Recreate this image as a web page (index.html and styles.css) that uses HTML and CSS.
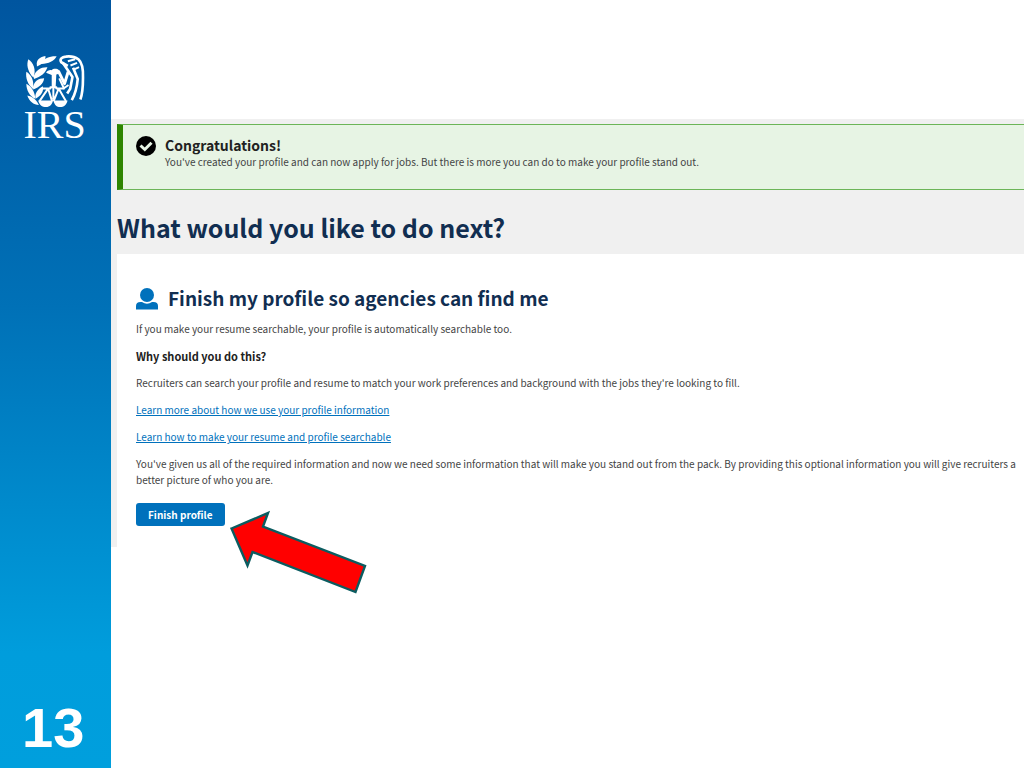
FILE: index.html
```html
<!DOCTYPE html>
<html lang="en">
<head>
<meta charset="utf-8">
<meta name="viewport" content="width=device-width, initial-scale=1">
<title>Finish profile</title>
<link rel="stylesheet" href="styles.css">
</head>
<body>
<div class="slide">
  <aside class="sidebar">
    <div class="brand">
      <svg class="emblem" viewBox="27 22 180 164" aria-hidden="true">
        <g fill="#fff">
          <path d="M62 56C60 42 68 31 88 28C89 42 80 53 62 60Z"/>
          <path d="M72 52C84 34 102 28 122 29C114 44 96 53 72 52Z"/>
          <path d="M36 38C52 50 60 68 52 94L46 88C34 72 30 54 36 38Z"/>
          <path d="M53 88C60 70 74 61 94 62C88 80 74 90 53 98Z"/>
          <path d="M30 76C46 86 54 104 50 128C34 114 27 96 30 76Z"/>
          <path d="M50 122C54 106 66 96 84 96C82 112 70 123 51 130Z"/>
          <path d="M30 112C46 121 56 136 57 158C40 150 30 132 30 112Z"/>
          <path d="M57 152C58 138 66 127 80 120C84 136 74 149 58 158Z"/>
          <path d="M33 148C48 151 60 160 68 177C52 177 38 165 33 148Z"/>
          <path d="M90 79C93 72 100 70 107 71C111 66 123 65 129 71C134 77 131 82 121 84L119 123H107V86Z"/>
        </g>
        <g fill="none" stroke="#fff" stroke-linejoin="round">
          <path stroke-width="8" d="M156 58L136 47C130 38 138 31 150 30C165 28 178 31 188 38C199 48 203 68 202 94C202 120 201 142 194 160"/>
          <path stroke-width="6" d="M76 127H103V123H121V127H146M96 127L70 165M96 127L108 165M128 127L113 165M128 127L150 165M112 122V160"/>
          <path stroke-width="9" d="M127 73L146 112L157 76"/>
          <path stroke-width="6" d="M130 96L144 126L158 116"/>
          <path stroke-width="8" d="M140 48L170 92L163 128L154 142M172 64L186 98C184 120 178 144 168 162"/>
          <path stroke-width="6" d="M156 44L178 38M164 57L184 49M172 70L190 62"/>
        </g>
        <path fill="#fff" d="M66 163H111C109 174 101 183 90 183C78 183 69 176 66 163ZM112 163H155C153 176 143 183 133 183C122 183 115 176 112 163Z"/>
      </svg>
      <span class="wordmark">IRS</span>
    </div>
    <span class="slide-number">13</span>
  </aside>

  <main class="content">
    <div class="panel">
      <section class="alert">
        <svg class="alert-icon" viewBox="0 0 20 20" aria-hidden="true">
          <circle cx="10" cy="10" r="10"/>
          <path d="M4.500 9.500L8.800 13.500L15.500 6.700" fill="none" stroke="#e7f4e4" stroke-width="3"/>
        </svg>
        <div>
          <h2 class="alert-title">Congratulations!</h2>
          <p class="alert-text">You've created your profile and can now apply for jobs. But there is more you can do to make your profile stand out.</p>
        </div>
      </section>
      <h1 class="page-title">What would you like to do next?</h1>
      <section class="card">
        <div class="card-heading">
          <svg class="person" viewBox="0 0 22 22" aria-hidden="true">
            <circle cx="11" cy="7" r="7"/>
            <path d="M0 21.500V18Q0 14 4.500 14H6Q11 17.500 16 14H17.500Q22 14 22 18V21.500Z"/>
          </svg>
          <h2 class="card-title">Finish my profile so agencies can find me</h2>
        </div>
        <p>If you make your resume searchable, your profile is automatically searchable too.</p>
        <h3 class="question">Why should you do this?</h3>
        <p>Recruiters can search your profile and resume to match your work preferences and background with the jobs they're looking to fill.</p>
        <p><a href="#profile-information">Learn more about how we use your profile information</a></p>
        <p><a href="#searchable">Learn how to make your resume and profile searchable</a></p>
        <p>You've given us all of the required information and now we need some information that will make you stand out from the pack. By providing this optional information you will give recruiters a better picture of who you are.</p>
        <div class="actions">
          <button class="primary" type="button">Finish profile</button>
          <svg class="arrow" viewBox="229 510 140 84" aria-hidden="true">
            <path d="M231.500 528.500L268 513L263 526.500L365 566L355.500 592L252.500 552L247.500 565.500Z" fill="#f00" stroke="#0b5c60" stroke-width="2.400"/>
          </svg>
        </div>
      </section>
    </div>
  </main>
</div>
</body>
</html>
```
FILE: styles.css
```css
* {
  box-sizing: border-box;
}

body,
h1,
h2,
h3,
p {
  margin: 0;
}

body {
  background: #fff;
  color: #444;
  font-family: "Noto Sans CJK SC", "Noto Sans", sans-serif;
  font-size: 10px;
  line-height: 16px;
}

.slide {
  display: flex;
  min-height: 100vh;
}

.sidebar {
  display: flex;
  flex: 0 0 111px;
  flex-direction: column;
  justify-content: space-between;
  padding: 54px 24px 8px 22px;
  background: linear-gradient(#00559f, #0071b7 40%, #009ddc 85%, #009fdd);
  color: #fff;
}

.brand {
  display: flex;
  flex-direction: column;
  align-items: center;
}

.emblem {
  width: 60px;
  height: 54px;
}

.wordmark {
  font-family: "Liberation Serif", serif;
  font-size: 40px;
  line-height: 34px;
}

.slide-number {
  font-family: "Liberation Sans", sans-serif;
  font-size: 56px;
  font-weight: bold;
  line-height: 64px;
}

.content {
  flex: 1;
  min-width: 0;
  padding-top: 119px;
}

.panel {
  padding: 5px 0 0 6px;
  background: #f0f0f0;
}

.alert {
  display: flex;
  gap: 9px;
  min-height: 66px;
  padding: 11px 13px;
  border: 1px solid #6cb558;
  border-right: 0;
  border-left: 6px solid #2e8500;
  background: #e7f4e4;
}

.alert-icon {
  flex: none;
  width: 20px;
  height: 20px;
}

.alert-title {
  color: #212121;
  font-size: 14px;
  line-height: 18px;
}

.page-title {
  padding: 19px 0 9px;
  color: #112e51;
  font-size: 25px;
  line-height: 36px;
}

.card {
  display: flex;
  flex-direction: column;
  gap: 11px;
  padding: 31px 8px 21px 19px;
  background: #fff;
}

.card-heading {
  display: flex;
  align-items: flex-end;
  gap: 10px;
}

.person {
  width: 22px;
  height: 22px;
  fill: #0071bc;
}

.card-title {
  color: #112e51;
  font-size: 19px;
  line-height: 25px;
}

.question {
  color: #212121;
  font-size: 11px;
  line-height: 16px;
}

a {
  color: #0071bc;
}

.actions {
  position: relative;
  padding-top: 4px;
}

.primary {
  display: block;
  padding: 4px 12px;
  border: 0;
  border-radius: 3px;
  background: #0071bc;
  color: #fff;
  font: bold 10px/15px "Noto Sans CJK SC", "Noto Sans", sans-serif;
}

.arrow {
  position: absolute;
  top: 11px;
  left: 93px;
  width: 140px;
  height: 84px;
}
```
